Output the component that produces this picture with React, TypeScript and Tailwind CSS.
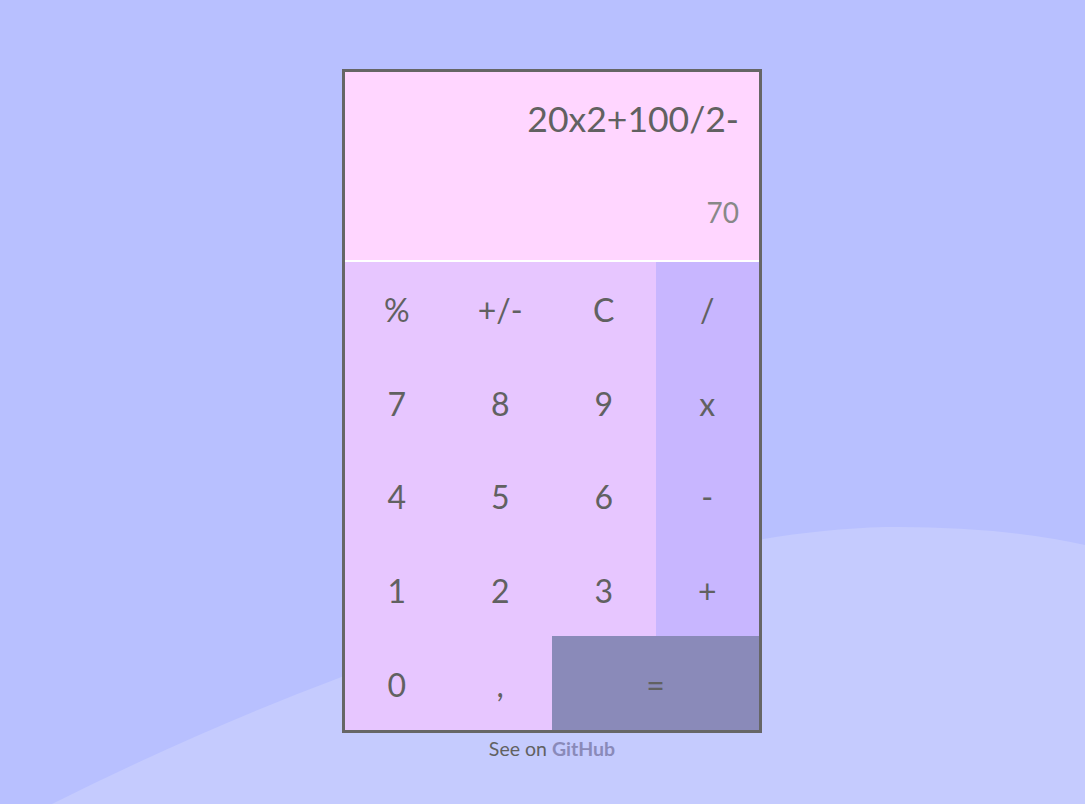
import React from 'react';

// 계산기 키 배열
const keys: { label: string; kind: 'num' | 'op' | 'eq' }[] = [
  { label: '%', kind: 'num' },
  { label: '+/-', kind: 'num' },
  { label: 'C', kind: 'num' },
  { label: '/', kind: 'op' },
  { label: '7', kind: 'num' },
  { label: '8', kind: 'num' },
  { label: '9', kind: 'num' },
  { label: 'x', kind: 'op' },
  { label: '4', kind: 'num' },
  { label: '5', kind: 'num' },
  { label: '6', kind: 'num' },
  { label: '-', kind: 'op' },
  { label: '1', kind: 'num' },
  { label: '2', kind: 'num' },
  { label: '3', kind: 'num' },
  { label: '+', kind: 'op' },
  { label: '0', kind: 'num' },
  { label: ',', kind: 'num' },
  { label: '=', kind: 'eq' },
];

const keyClass = {
  num: 'bg-[#e7c6ff]',
  op: 'bg-[#c8b6ff]',
  eq: 'bg-[#8a8ab9] col-span-2',
};

const App: React.FC = () => {
  return (
    <div className="relative min-h-screen h-[804px] overflow-hidden bg-[#b8c0ff] font-['Lato',sans-serif] text-[#616161]">
      <svg className="absolute inset-0" width="1085" height="804" viewBox="0 0 1085 804">
        <path
          d="M 52 804 Q 200 730 339 678 C 520 600 700 532 886 527 Q 1000 526 1085 545 L 1085 804 Z"
          fill="#c5cbfe"
        />
      </svg>

      <div className="relative flex flex-col items-center pt-[69px] pl-[19px]">
        <div className="w-[420px] border-[3px] border-[#666666]">
          <div className="h-[190px] bg-[#ffd6ff] flex flex-col items-end pl-5 pr-[20px] pt-[25px] border-b-2 border-white">
            <div className="text-[35.5px] leading-[44px]">20x2+100/2-</div>
            <div className="mt-[54px] text-[28px] leading-[34px] text-[#888888]">70</div>
          </div>
          <div className="grid grid-cols-4 grid-rows-[repeat(5,93.6px)]">
            {keys.map((k) => (
              <button
                key={k.label}
                className={`${keyClass[k.kind]} flex items-center justify-center pt-[3px] text-[32px] text-[#616161]`}
              >
                {k.label}
              </button>
            ))}
          </div>
        </div>
        <p className="mt-[3px] text-[19.5px] leading-[26px]">
          See on <span className="font-bold text-[#8a8ab9]">GitHub</span>
        </p>
      </div>
    </div>
  );
};

export default App;
